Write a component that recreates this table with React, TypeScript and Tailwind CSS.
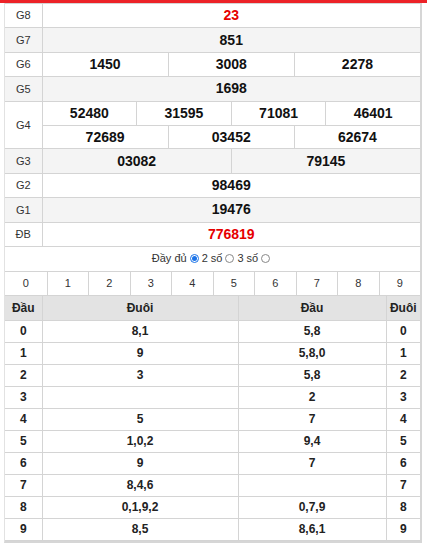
import React from 'react';

const font = { fontFamily: '"Liberation Sans", Arial, sans-serif' };

type Prize = { label: string; rows: string[][]; red?: boolean };

const prizes: Prize[] = [
  { label: 'G8', rows: [['23']], red: true },
  { label: 'G7', rows: [['851']] },
  { label: 'G6', rows: [['1450', '3008', '2278']] },
  { label: 'G5', rows: [['1698']] },
  { label: 'G4', rows: [['52480', '31595', '71081', '46401'], ['72689', '03452', '62674']] },
  { label: 'G3', rows: [['03082', '79145']] },
  { label: 'G2', rows: [['98469']] },
  { label: 'G1', rows: [['19476']] },
  { label: 'ĐB', rows: [['776819']], red: true },
];

const loto = [
  ['0', '8,1', '5,8', '0'],
  ['1', '9', '5,8,0', '1'],
  ['2', '3', '5,8', '2'],
  ['3', '', '2', '3'],
  ['4', '5', '7', '4'],
  ['5', '1,0,2', '9,4', '5'],
  ['6', '9', '7', '6'],
  ['7', '8,4,6', '', '7'],
  ['8', '0,1,9,2', '0,7,9', '8'],
  ['9', '8,5', '8,6,1', '9'],
];

function Radio({ checked }: { checked?: boolean }) {
  return (
    <span
      className={`inline-flex items-center justify-center w-[9px] h-[9px] rounded-full border ${
        checked ? 'border-[#1a73e8]' : 'border-[#888]'
      } mx-[3px]`}
    >
      {checked && <span className="w-[5px] h-[5px] rounded-full bg-[#1a73e8]" />}
    </span>
  );
}

export default function App() {
  return (
    <div className="w-[427px] h-[545px] bg-white overflow-hidden text-[#222]" style={font}>
      <div className="h-[3px] bg-[#ec2227]" />
      <div className="ml-[4px] w-[418px] border-l border-r-2 border-b-2 border-[#e2e2e2] border-r-[#d6d6d6] border-b-[#d6d6d6]">
        <table className="w-full border-collapse table-fixed">
          <tbody>
            {prizes.map((p, i) => (
              <tr key={p.label} className={i % 2 === 1 ? 'bg-[#f4f4f4]' : 'bg-white'}>
                <td className="w-[37px] border border-[#d4d4d4] text-center text-[11px] text-[#333] border-l-0">
                  {p.label}
                </td>
                <td className="border border-[#d4d4d4] p-0 border-r-0">
                  {p.rows.map((r, j) => (
                    <div
                      key={j}
                      className={`flex h-[23.4px] ${j > 0 ? 'border-t border-[#d4d4d4]' : ''}`}
                    >
                      {r.map((n, k) => (
                        <div
                          key={k}
                          className={`flex-1 flex items-center justify-center text-[14px] font-bold ${
                            p.red ? 'text-[#e60000]' : 'text-[#111]'
                          } ${k > 0 ? 'border-l border-[#d4d4d4]' : ''}`}
                        >
                          {n}
                        </div>
                      ))}
                    </div>
                  ))}
                </td>
              </tr>
            ))}
          </tbody>
        </table>

        <div className="h-[23px] flex items-center justify-center text-[11px] text-[#333]">
          <span>Đầy đủ</span>
          <Radio checked />
          <span>2 số</span>
          <Radio />
          <span>3 số</span>
          <Radio />
        </div>

        <div className="mt-[1px] grid grid-cols-10 border-t border-[#d4d4d4]">
          {Array.from({ length: 10 }, (_, i) => (
            <div
              key={i}
              className={`h-[23px] flex items-center justify-center text-[11px] text-[#333] ${
                i > 0 ? 'border-l border-[#d4d4d4]' : ''
              }`}
            >
              {i}
            </div>
          ))}
        </div>

        <table className="w-full border-collapse table-fixed">
          <thead>
            <tr className="bg-[#e3e3e3] h-[25px] text-[12px] font-bold">
              <th className="w-[37px] border border-[#d4d4d4] border-l-0">Đầu</th>
              <th className="w-[196px] border border-[#d4d4d4]">Đuôi</th>
              <th className="border border-[#d4d4d4]">Đầu</th>
              <th className="w-[34px] border border-[#d4d4d4] border-r-0">Đuôi</th>
            </tr>
          </thead>
          <tbody>
            {loto.map((r) => (
              <tr key={r[0]} className="h-[22px] text-[12px] font-bold">
                <td className="border border-[#d4d4d4] border-l-0 text-center">{r[0]}</td>
                <td className="border border-[#d4d4d4] text-center">{r[1]}</td>
                <td className="border border-[#d4d4d4] text-center">{r[2]}</td>
                <td className="border border-[#d4d4d4] border-r-0 text-center">{r[3]}</td>
              </tr>
            ))}
          </tbody>
        </table>
      </div>
    </div>
  );
}
